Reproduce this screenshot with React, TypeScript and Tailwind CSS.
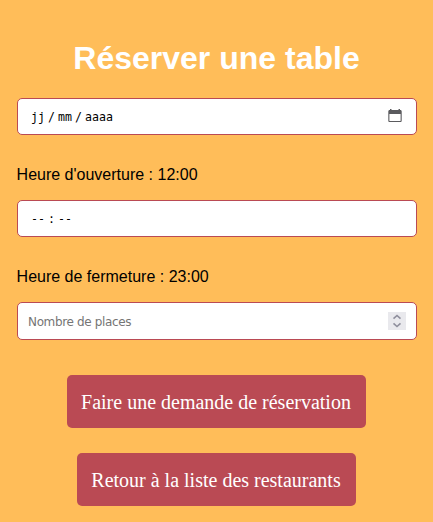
const fieldClass =
  "flex w-full shrink-0 items-center rounded-[5px] border border-[#ba4a54] bg-white";

const segmentClass =
  "flex font-['DejaVu_Sans_Mono',monospace] text-[11.6px] leading-[14px] whitespace-nowrap text-black";

const buttonClass =
  "mr-[2px] h-[53px] shrink-0 rounded-[5px] bg-[#ba4a54] font-['Liberation_Serif',serif] text-[20px] whitespace-nowrap text-white";

function CalendarIcon() {
  return (
    <svg width="14" height="14" viewBox="0 0 14 14" className="mb-px shrink-0" fill="#5b5b5e">
      <path
        fillRule="evenodd"
        d="M2 0h1.5v1h7V0H12v1h.4c.8 0 1.3.6 1.3 1.5v9.2c0 .8-.5 1.3-1.3 1.3H1.6C.8 13 .3 12.5.3 11.7V2.5C.3 1.6.8 1 1.6 1H2ZM1.4 5v6.4c0 .3.2.6.5.6h10.2c.3 0 .5-.3.5-.6V5Z"
      />
    </svg>
  );
}

function Spinner() {
  return (
    <span className="flex h-[18px] w-[18px] shrink-0 items-center justify-center bg-[#e9e9ed]">
      <svg width="18" height="18" viewBox="0 0 18 18" fill="none" stroke="#8f8f9d" strokeWidth="1.6">
        <path d="M5.5 6.7L9 3.5L12.5 6.7M5.5 11.3L9 14.5L12.5 11.3" />
      </svg>
    </span>
  );
}

export default function App() {
  return (
    <main className="flex h-[522px] w-[433px] flex-col items-center overflow-hidden bg-[#ffbd59] pr-4 pl-[17px] font-['Liberation_Sans',Arial,sans-serif] text-black">
      <h1 className="mt-[40px] mr-[1px] shrink-0 text-[32px] leading-[37px] font-bold whitespace-nowrap text-white">
        Réserver une table
      </h1>
      <div className={fieldClass + " mt-[21px] h-[37px] pr-[14px] pl-[13px]"}>
        <div className={segmentClass + " grow"}>
          <span>jj</span>
          <span className="w-[13px] text-center">/</span>
          <span>mm</span>
          <span className="w-[13px] text-center">/</span>
          <span>aaaa</span>
        </div>
        <CalendarIcon />
      </div>
      <p className="mt-[31px] -ml-[0.8px] w-full shrink-0 text-[16px] leading-[18px]">Heure d'ouverture : 12:00</p>
      <div className={fieldClass + " mt-[16px] h-[37px] pl-[13px]"}>
        <div className={segmentClass}>
          <span>--</span>
          <span className="w-[13px] text-center">:</span>
          <span>--</span>
        </div>
      </div>
      <p className="mt-[31px] -ml-[0.8px] w-full shrink-0 text-[16px] leading-[18px]">Heure de fermeture : 23:00</p>
      <div className={fieldClass + " mt-[16px] h-[38px] pr-[10px] pl-[10px]"}>
        <span className="grow pt-px font-['DejaVu_Sans',sans-serif] text-[12px] tracking-[-0.35px] text-[#757575]">
          Nombre de places
        </span>
        <Spinner />
      </div>
      <button className={buttonClass + " mt-[35px] w-[299px]"}>Faire une demande de réservation</button>
      <button className={buttonClass + " mt-[25px] w-[279px]"}>Retour à la liste des restaurants</button>
    </main>
  );
}
